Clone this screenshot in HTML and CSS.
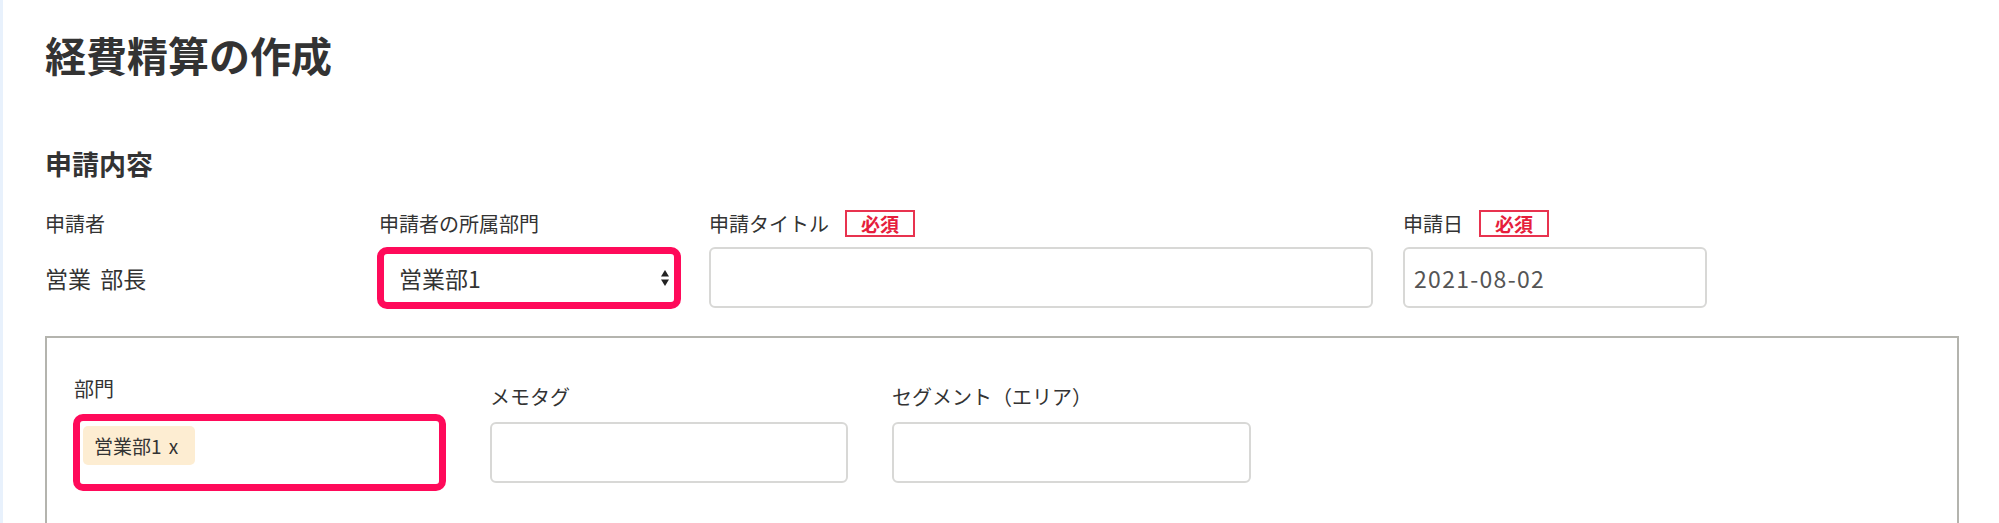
FILE: index.html
```html
<!DOCTYPE html>
<html lang="ja">
<head>
    <meta charset="UTF-8">
    <meta name="viewport" content="width=device-width, initial-scale=1.0">
    <title>経費精算の作成</title>
    <link rel="stylesheet" href="styles.css">
</head>
<body>
    <div class="page">
        <h1 class="page-title">経費精算の作成</h1>

        <section class="request">
            <h2 class="section-title">申請内容</h2>

            <div class="field-row">
                <div class="field field-applicant">
                    <div class="field-label">申請者</div>
                    <div class="field-value">営業 部長</div>
                </div>

                <div class="field field-dept">
                    <div class="field-label">申請者の所属部門</div>
                    <div class="select-box marked">
                        <span>営業部1</span>
                        <svg class="select-arrows" width="10" height="18" viewBox="0 0 10 18">
                            <path d="M5 1 L9 7.5 L1 7.5 Z" fill="#222"/>
                            <path d="M5 17 L9 10.5 L1 10.5 Z" fill="#222"/>
                        </svg>
                    </div>
                </div>

                <div class="field field-title">
                    <div class="field-label">申請タイトル <span class="badge">必須</span></div>
                    <input class="text-input" type="text" name="title">
                </div>

                <div class="field field-date">
                    <div class="field-label">申請日 <span class="badge">必須</span></div>
                    <input class="text-input date-input" type="text" name="date" value="2021-08-02">
                </div>
            </div>

            <!-- 明細パネル -->
            <div class="panel">
                <div class="panel-row">
                    <div class="field field-tags">
                        <div class="field-label">部門</div>
                        <div class="tag-input marked">
                            <span class="tag">営業部1&nbsp;x</span>
                        </div>
                    </div>

                    <div class="field field-memo">
                        <div class="field-label">メモタグ</div>
                        <input class="text-input" type="text" name="memo">
                    </div>

                    <div class="field field-segment">
                        <div class="field-label">セグメント（エリア）</div>
                        <input class="text-input" type="text" name="segment">
                    </div>
                </div>
            </div>
        </section>
    </div>
</body>
</html>
```

FILE: styles.css
```css
* {
    box-sizing: border-box;
}
body {
    font-family: "Noto Sans CJK JP", "Noto Sans", sans-serif;
    background-color: #fff;
    color: #333;
    margin: 0;
    padding: 0;
}
.page {
    border-left: 3px solid #e8f1fc;
    padding: 30px 0 0 42px;
    min-height: 523px;
}
.page-title {
    font-size: 41px;
    line-height: 48px;
    font-weight: bold;
    margin: 0;
}
.section-title {
    font-size: 27px;
    line-height: 36px;
    font-weight: bold;
    margin: 68px 0 0 0;
}
.field-row {
    display: flex;
    margin-top: 27px;
}
.field {
    display: flex;
    flex-direction: column;
}
.field-label {
    display: flex;
    align-items: center;
    gap: 16px;
    height: 28px;
    font-size: 20px;
    margin-bottom: 10px;
}
.field-applicant {
    width: 332px;
}
.field-value {
    height: 61px;
    display: flex;
    align-items: center;
    font-size: 23px;
    word-spacing: 4px;
}
.field-dept {
    width: 304px;
    margin-right: 28px;
}
.field-dept .field-label {
    padding-left: 2px;
}
.field-title {
    width: 664px;
    margin-right: 30px;
}
.field-date {
    width: 304px;
}
.badge {
    display: inline-flex;
    align-items: center;
    justify-content: center;
    width: 70px;
    height: 27px;
    border: 2px solid #e8334f;
    color: #e61e3c;
    font-size: 19px;
    line-height: 1;
    font-weight: bold;
}
.text-input {
    width: 100%;
    height: 61px;
    border: 2px solid #d8d8d6;
    border-radius: 6px;
    padding: 0 9px;
    font-family: inherit;
    font-size: 23px;
    color: #555;
    background: #fff;
    outline: none;
}
.date-input {
    letter-spacing: 1.3px;
}
.marked {
    border: 7px solid #ff0a5a;
    border-radius: 10px;
    background: #fff;
}
.select-box {
    height: 62px;
    display: flex;
    align-items: center;
    justify-content: space-between;
    padding: 0 4px 0 15px;
    font-size: 23px;
}
.panel {
    margin-top: 27px;
    margin-right: 40px;
    border: 2px solid #b4b4ae;
    border-bottom: none;
    padding: 36px 26px 60px 26px;
}
.panel-row {
    display: flex;
    align-items: center;
    gap: 44px;
}
.panel .field-label {
    margin-bottom: 12px;
}
.field-tags {
    width: 373px;
}
.field-tags .field-label {
    padding-left: 1px;
}
.tag-input {
    height: 77px;
    padding: 5px 3px;
}
.tag {
    display: inline-block;
    height: 39px;
    line-height: 39px;
    padding: 0 17px 0 11px;
    background-color: #fdedd2;
    border-radius: 5px;
    font-size: 19px;
    word-spacing: 3px;
}
.field-memo {
    width: 358px;
}
.field-segment {
    width: 359px;
}
```
